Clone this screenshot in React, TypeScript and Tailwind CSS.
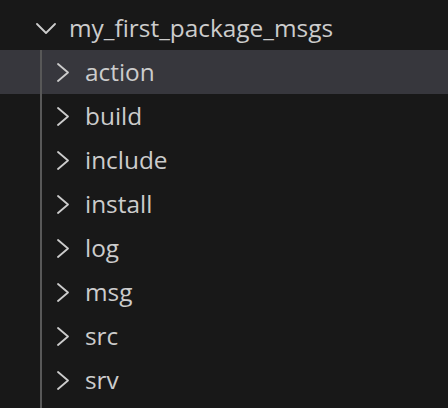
const children = ["action", "build", "include", "install", "log", "msg", "src", "srv"];

function ChevronDown() {
  return (
    <svg width="20" height="11" viewBox="0 0 20 11" className="shrink-0">
      <polyline points="1,1 10,10 19,1" fill="none" stroke="#cccccc" strokeWidth="1.8" strokeLinecap="round" strokeLinejoin="round" />
    </svg>
  );
}

function ChevronRight() {
  return (
    <svg width="12" height="19" viewBox="0 0 12 19" className="shrink-0">
      <polyline points="1,1 11,9.5 1,18" fill="none" stroke="#cccccc" strokeWidth="1.8" strokeLinecap="round" strokeLinejoin="round" />
    </svg>
  );
}

export default function App() {
  return (
    <div
      className="w-[448px] h-[408px] overflow-hidden bg-[#181818] text-[#cccccc] pt-[6px]"
      style={{ fontFamily: '"Open Sans", "Noto Sans", sans-serif' }}
    >
      <div className="h-[44px] flex items-center pl-[36px] gap-[13px] text-[24.4px]">
        <ChevronDown />
        <span className="leading-none">my_first_package_msgs</span>
      </div>
      {children.map((name, i) => (
        <div key={name} className={`h-[44px] pl-[40px] ${i === 0 ? "bg-[#37373d]" : ""}`}>
          <div className="h-full border-l-2 border-[#585858] flex items-center pl-[15px] gap-[16px] text-[24.4px]">
            <ChevronRight />
            <span className="leading-none">{name}</span>
          </div>
        </div>
      ))}
      <div className="h-[44px] pl-[40px]">
        <div className="h-full border-l-2 border-[#585858]" />
      </div>
    </div>
  );
}
